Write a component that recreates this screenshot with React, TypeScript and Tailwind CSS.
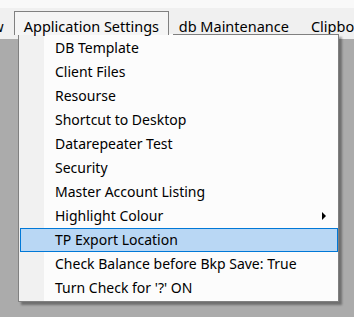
const items = [
  'DB Template',
  'Client Files',
  'Resourse',
  'Shortcut to Desktop',
  'Datarepeater Test',
  'Security',
  'Master Account Listing',
  'Highlight Colour',
  'TP Export Location',
  'Check Balance before Bkp Save: True',
  "Turn Check for '?' ON",
];

export default function App() {
  return (
    <div className="relative w-[354px] h-[317px] overflow-hidden bg-[#ababab] text-[14px] text-black font-['Noto_Sans',sans-serif]">
      {/* menu bar */}
      <div className="h-[39px] bg-[#f0f0f0] border-t-[8px] border-[#f9f9f9] flex items-start pt-[3px] whitespace-nowrap text-[14.5px]">
        <span className="shrink-0 ml-[-28px] mt-[5px] leading-[20px]">View</span>
        <div className="relative z-10 shrink-0 ml-[10px] h-[24px] w-[155px] bg-[#f5f5f5] border-t border-l border-r border-[#808080] pl-[9px] pt-[4px] leading-[20px]">
          Application Settings
        </div>
        <span className="shrink-0 ml-[10px] mt-[5px] leading-[20px]">db Maintenance</span>
        <span className="shrink-0 ml-[22px] mt-[5px] leading-[20px]">Clipboard</span>
      </div>

      {/* dropdown */}
      <div className="absolute left-[18px] top-[34px] w-[321px] h-[268px] border-l border-r border-b border-[#808080] bg-[linear-gradient(90deg,#f1f1f1_0,#f1f1f1_25px,#fcfcfc_25px)] pt-[2px] shadow-[3px_3px_2px_0_rgba(0,0,0,0.35)]">
        <div className="absolute top-0 left-[154px] right-[-1px] h-px bg-[#808080]" />
        {items.map((label) => {
          const active = label === 'TP Export Location';
          return (
            <div
              key={label}
              className={`ml-px h-[24px] flex items-center justify-between pl-[34px] border whitespace-nowrap ${
                active ? 'bg-[#b9d7f4] border-[#0078d7]' : 'border-transparent'
              }`}
            >
              <span className="leading-[20px]">{label}</span>
              {label === 'Highlight Colour' && (
                <svg width="5" height="8" viewBox="0 0 5 8" className="mr-[10px]">
                  <polygon points="0,0 4,4 0,8" fill="#000" />
                </svg>
              )}
            </div>
          );
        })}
      </div>
    </div>
  );
}
